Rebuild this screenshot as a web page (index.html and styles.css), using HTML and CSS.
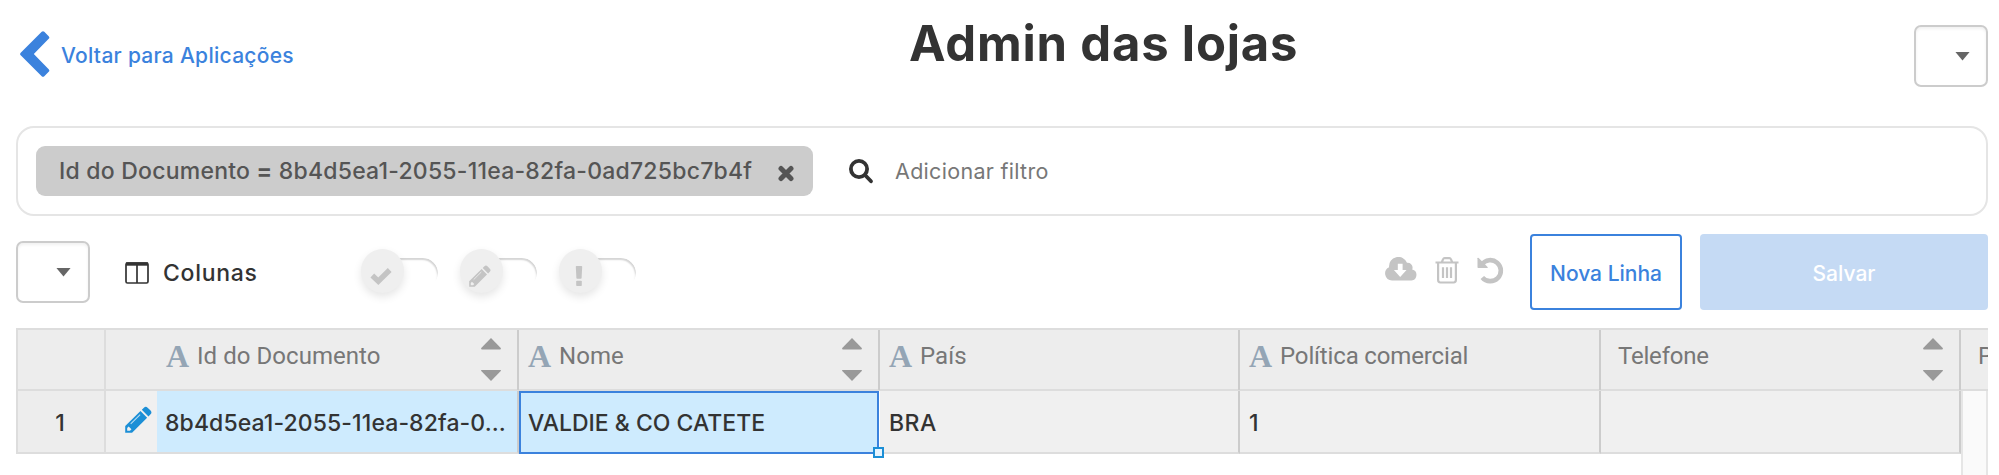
FILE: index.html
```html
<!DOCTYPE html>
<html lang="pt-BR">
<head>
<meta charset="utf-8">
<title>Admin das lojas</title>
<link rel="stylesheet" href="styles.css">
</head>
<body>
<svg width="0" height="0" class="defs">
  <defs>
    <symbol id="pencil" viewBox="0 0 26 26"><path d="M18.2 1.6a2.6 2.6 0 0 1 3.6 0l2.8 2.8a2.6 2.6 0 0 1 0 3.6l-2 2-6.4-6.4zM14.9 4.8l6.4 6.4L6.8 25.8H.2v-6.6zM2.1 21.2v2.7h2.7l1.4-1.4-2.7-2.7z" fill-rule="evenodd"/><path d="M5.5 17.3 14.6 8.2" class="pencil-shine"/></symbol>
  </defs>
</svg>
<div class="page">
  <header class="header">
    <a class="back">
      <svg class="back-icon" width="30" height="46" viewBox="0 0 30 46"><path d="M21.7.7q1.3-1.1 2.6 0l4.4 4.5q1.3 1.3 0 2.6L13.8 23l14.9 15.2q1.3 1.3 0 2.6l-4.4 4.5q-1.3 1.1-2.6 0L.7 24.300q-1.200-1.300 0-2.600z"/></svg>
      <span>Voltar para Aplicações</span>
    </a>
    <h1 class="title">Admin das lojas</h1>
    <button class="select"><span class="caret"></span></button>
  </header>

  <section class="filters">
    <div class="chip">
      <span>Id do Documento <b>=</b> 8b4d5ea1-2055-11ea-82fa-0ad725bc7b4f</span>
      <svg class="chip-x" width="18" height="17" viewBox="0 0 18 17"><path d="M4 3.500 14 13.500M14 3.500 4 13.500"/></svg>
    </div>
    <svg class="search" width="25" height="25" viewBox="0 0 25 25"><circle cx="10" cy="10" r="8.100"/><path d="m16 16 6 6.300"/></svg>
    <span class="add-filter">Adicionar filtro</span>
  </section>

  <div class="toolbar">
    <button class="select"><span class="caret"></span></button>
    <div class="columns">
      <svg width="24" height="22" viewBox="0 0 24 22"><rect x="1" y="1" width="22" height="20" rx="1.500"/><path d="M12 3v18"/><path class="thick" d="M1 2h22"/></svg>
      <span>Colunas</span>
    </div>
    <div class="toggles">
      <div class="toggle"><span class="track"></span><span class="knob"><svg width="22" height="18" viewBox="0 0 22 18"><path class="check" d="m2.300 8.500 6 5.700L19.700 3"/></svg></span></div>
      <div class="toggle"><span class="track"></span><span class="knob"><svg width="22" height="22"><use href="#pencil"/></svg></span></div>
      <div class="toggle"><span class="track"></span><span class="knob"><svg width="8" height="20" viewBox="0 0 8 20"><path d="M.800.800Q.800 0 1.600 0h4.800q.800 0 .800.800L6.600 12q0 .800-.800.800H2.200q-.800 0-.800-.800z"/><rect x="1.200" y="14.700" width="5.600" height="5.300" rx=".8"/></svg></span></div>
    </div>
    <div class="actions">
      <svg width="32" height="24" viewBox="0 0 32 24"><path fill-rule="evenodd" d="M7 23.500a7 7 0 0 1-2.900-13.300A9.300 9.300 0 0 1 22 5.800a4.900 4.900 0 0 1 5.200 6.700A5.600 5.600 0 0 1 26.500 23.500zM12.800 6.700v6.200H8.900l6.300 7 6.300-7h-3.900V6.700z"/></svg>
      <svg class="trash" width="24" height="27" viewBox="0 0 24 27"><path d="M.500 5.500h23M6.800 5.200l1.300-3Q8.500 1.200 9.600 1.200h4.800q1.100 0 1.500 1l1.300 3M3.100 6v16.800q0 2.700 2.300 2.700h13.200q2.300 0 2.300-2.700V6M8 10.200v10.700M12 10.200v10.700M16 10.200v10.700"/></svg>
      <svg class="undo" width="27" height="27" viewBox="0 0 27 27"><path class="arc" d="M4.800 7.500A10.500 10.500 0 1 1 5.300 20.400"/><path d="M.500 1.300v9q0 .700.700.700h9q1-.200.400-1.100L1.700.900Q.600.200.500 1.300z"/></svg>
    </div>
    <button class="btn btn-new">Nova Linha</button>
    <button class="btn btn-save">Salvar</button>
  </div>

  <div class="grid">
    <div class="row head">
      <div class="cell index"></div>
      <div class="cell first"><span class="type">A</span><span>Id do Documento</span><span class="sort"><i class="up"></i><i class="down"></i></span></div>
      <div class="cell"><span class="type">A</span><span>Nome</span><span class="sort"><i class="up"></i><i class="down"></i></span></div>
      <div class="cell"><span class="type">A</span><span>País</span></div>
      <div class="cell"><span class="type">A</span><span class="pol">Política comercial</span></div>
      <div class="cell plain"><span class="tel">Telefone</span><span class="sort"><i class="up"></i><i class="down"></i></span></div>
      <div class="cell plain">P</div>
    </div>
    <div class="row body">
      <div class="cell index">1</div>
      <div class="cell first"><span class="edit"><svg width="27" height="27"><use href="#pencil"/></svg></span><span class="doc">8b4d5ea1-2055-11ea-82fa-0...</span></div>
      <div class="cell selected">VALDIE &amp; CO CATETE<span class="handle"></span></div>
      <div class="cell bra">BRA</div>
      <div class="cell">1</div>
      <div class="cell"></div>
      <div class="scroll"></div>
    </div>
  </div>
</div>
</body>
</html>
```

FILE: styles.css
```css
* { box-sizing: border-box; }
body { margin: 0; background: #fff; color: #333; font-family: Inter, "Open Sans", sans-serif; }
button { font: inherit; margin: 0; padding: 0; }
svg { display: block; flex: none; }
.defs { position: absolute; }
.page { width: 1999px; height: 475px; padding: 0 11px 0 16px; overflow: hidden; white-space: nowrap; }

.header { display: grid; grid-template-columns: 893px 1fr 74px; height: 126px; align-items: start; }
.back { display: flex; align-items: center; gap: 11px; padding: 31px 0 0 4px; color: #3b82dd; font-size: 21px; font-weight: 500; letter-spacing: .28px; }
.back span { padding-top: 3px; }
.back-icon { fill: #3b82dd; }
.title { margin: 0; padding-top: 14px; font-size: 49px; line-height: 60px; font-weight: 700; letter-spacing: .8px; }
.select { display: block; flex: none; width: 74px; height: 62px; border: 2px solid #ccc; border-radius: 7px; background: #fff; box-shadow: inset 0 2px 3px rgba(0,0,0,.06); padding-left: 38px; }
.header .select { margin-top: 25px; padding-left: 39px; }
.caret { display: block; width: 15px; height: 9px; background: #666; clip-path: polygon(0 0, 100% 0, 50% 100%); }

.filters { display: flex; align-items: center; height: 90px; border: 2px solid #e5e5e5; border-radius: 18px; padding: 0 18px; }
.chip { display: flex; align-items: center; justify-content: space-between; width: 777px; height: 50px; padding: 0 18px 0 23px; border-radius: 9px; background: #ccc; color: #555; font-size: 23px; font-weight: 500; letter-spacing: .23px; }
.chip span { padding-bottom: 1px; }
.chip-x { fill: none; stroke: #555; stroke-width: 5; margin-top: 5px; stroke-linecap: round; }
.search { margin: 1px 21px 0 36px; fill: none; stroke: #333; stroke-width: 3.8; stroke-linecap: round; }
.add-filter { color: #777; font-size: 21.500px; letter-spacing: .3px; }

.toolbar { display: flex; height: 112px; padding-top: 18px; align-items: flex-start; }
.toolbar .select { margin-top: 7px; }
.columns { display: flex; align-items: center; gap: 14px; margin: 25px 0 0 35px; width: 236px; font-size: 23px; font-weight: 500; letter-spacing: .7px; }
.columns svg { fill: none; stroke: #333; stroke-width: 1.700; }
.columns .thick { stroke-width: 3.400; }
.toggles { display: flex; gap: 22px; margin: 15px 0 0 0; }
.toggle { position: relative; width: 77px; height: 43px; }
.knob { position: absolute; inset: 0 auto auto 0; width: 43px; height: 44px; border-radius: 50%; background: #efefef; box-shadow: 0 4px 9px rgba(0,0,0,.1); display: flex; align-items: center; justify-content: center; padding: 10px 3px 0 0; fill: #c4c4c4; }
.knob .check { fill: none; stroke: #c4c4c4; stroke-width: 5.400; stroke-linejoin: miter; }
.pencil-shine { fill: none; stroke: #fff; stroke-width: 1; opacity: .7; }
.track { position: absolute; inset: 9px 0 auto 12px; height: 30px; border-radius: 15px; box-shadow: inset -1px 2px 1.500px rgba(0,0,0,.17); mask-image: linear-gradient(#000 45%, transparent 80%); }
.actions { display: flex; margin: 23px 0 0 auto; gap: 18px; width: 145px; fill: #c4c4c4; }
.trash { fill: none; stroke: #c4c4c4; stroke-width: 2.200; }
.undo .arc { fill: none; stroke: #c4c4c4; stroke-width: 4.600; }
.btn { flex: none; height: 76px; border-radius: 4px; font-size: 21px; font-weight: 500; padding-top: 2px; }
.btn-new { width: 152px; border: 2px solid #3b82dd; background: #fff; color: #3b82dd; margin-right: 18px; }
.btn-save { width: 288px; border: 0; background: #c5daf4; color: #fff; }

.grid { width: 1972px; height: 147px; overflow: hidden; }
.row { display: grid; grid-template-columns: 90px 413px 361px 360px 361px 360px 361px; }
.cell { display: flex; align-items: center; border-right: 2px solid #ccc; padding-left: 9px; }
.head { width: 2306px; height: 63px; border: solid #ddd; border-width: 2px 0; background: #ededed; color: #777; font: 24px Roboto, sans-serif; letter-spacing: .05px; }
.head .cell { padding-bottom: 9px; }
.head .index, .body .index { border-left: 2px solid #ddd; border-right: 2px solid #ddd; }
.type { width: 31px; color: #94a5b5; font: bold 32px/32px "Liberation Serif", serif; }
.head .first { padding-left: 60px; }
.head .plain { padding-left: 17px; }
.pol { letter-spacing: -.15px; }
.tel { letter-spacing: -.2px; }
.sort { display: flex; flex-direction: column; gap: 20px; margin: 8px 16px 0 auto; }
.sort i { width: 20px; height: 11.500px; background: #999; }
.up { clip-path: polygon(50% 0, 100% 90%, 97% 100%, 3% 100%, 0 90%); }
.down { clip-path: polygon(50% 100%, 100% 10%, 97% 0, 3% 0, 0 10%); }
.body { height: 84px; font-size: 23px; font-weight: 500; grid-template-rows: 63px; }
.body .cell { padding-top: 2px; background: #f0f0f0; border-bottom: 2px solid #ddd; }
.body .index { background: #ededed; padding: 2px 2px 0 0; justify-content: center; }
.body .first { background: #ceebfe; padding: 0; }
.edit { align-self: stretch; display: flex; align-items: center; width: 51px; margin-right: 8px; padding-left: 19px; padding-bottom: 4px; background: #f0f0f0; fill: #1c8fd6; }
.doc { padding-top: 2px; letter-spacing: .1px; }
.bra { letter-spacing: .5px; }
.body .selected { position: relative; background: #ceebfe; border: 2px solid #3b82dd; padding: 0 0 0 7px; margin-right: 1px; }
.handle { position: absolute; right: -7px; bottom: -6px; width: 11px; height: 11px; border: 2px solid #1c8fd6; background: #e6f4ff; z-index: 1; }
.scroll { height: 84px; width: 27px; background: #fafafa; border: solid #e6e6e6; border-width: 0 2px; }
```
